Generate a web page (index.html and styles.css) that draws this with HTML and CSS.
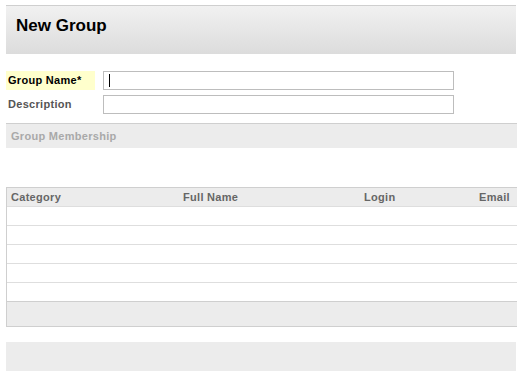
FILE: index.html
```html
<!DOCTYPE html>
<html lang="en">
<head>
    <meta charset="utf-8">
    <title>New Group</title>
    <link rel="stylesheet" href="styles.css">
</head>
<body>
<div class="page">
    <div class="title-bar">
        <h1>New Group</h1>
    </div>

    <div class="form">
        <div class="form-row">
            <label class="label required" for="groupName">Group Name*</label>
            <div class="field"><input type="text" id="groupName" class="text-input"><span class="caret"></span></div>
        </div>
        <div class="form-row">
            <label class="label" for="description">Description</label>
            <div class="field"><input type="text" id="description" class="text-input"></div>
        </div>
    </div>

    <div class="section-bar">Group Membership</div>

    <div class="grid">
        <div class="grid-head">
            <div class="col col-category">Category</div>
            <div class="col col-name">Full Name</div>
            <div class="col col-login">Login</div>
            <div class="col col-email">Email</div>
        </div>
        <div class="grid-row"></div>
        <div class="grid-row"></div>
        <div class="grid-row"></div>
        <div class="grid-row"></div>
        <div class="grid-row"></div>
        <div class="grid-foot"></div>
    </div>

    <div class="button-bar"></div>
</div>
</body>
</html>
```

FILE: styles.css
```css
body {
    margin: 0;
    font-family: "Liberation Sans", Arial, sans-serif;
    font-size: 11px;
    letter-spacing: 0.3px;
    background: #fff;
    overflow: hidden;
}

.page {
    padding: 5px 0 0 6px;
}

.title-bar {
    width: 510px;
    height: 48px;
    border-top: 1px solid #cfcfcf;
    background: linear-gradient(to bottom, #f1f1f1 0%, #dcdcdc 100%);
    display: flex;
    align-items: center;
}

.title-bar h1 {
    margin: 0 0 9px 10px;
    font-size: 17px;
    letter-spacing: 0;
    font-weight: bold;
    color: #000;
}

.form {
    padding-top: 17px;
    display: flex;
    flex-direction: column;
    gap: 5px;
}

.form-row {
    display: flex;
    align-items: center;
    height: 19px;
}

.label {
    width: 87px;
    height: 19px;
    line-height: 19px;
    padding-left: 2px;
    font-weight: bold;
    color: #555;
}

.label.required {
    background: #ffffcc;
    color: #000;
}

.field {
    position: relative;
    margin-left: 8px;
}

.text-input {
    box-sizing: border-box;
    width: 351px;
    height: 19px;
    margin: 0;
    border: 1px solid #bdbdbd;
    padding: 0 4px;
    outline: none;
    display: block;
}

.caret {
    position: absolute;
    left: 6px;
    top: 3px;
    width: 1px;
    height: 13px;
    background: #000;
}

.section-bar {
    margin-top: 9px;
    width: 511px;
    height: 24px;
    line-height: 24px;
    border-top: 1px solid #cfcfcf;
    background: #ececec;
    padding-left: 5px;
    font-weight: bold;
    color: #a9a9a9;
}

.grid {
    margin-top: 39px;
    width: 514px;
    border-left: 1px solid #cfcfcf;
}

.grid-head {
    display: flex;
    height: 18px;
    line-height: 18px;
    border-top: 1px solid #cfcfcf;
    background: #ececec;
    font-weight: bold;
    color: #666;
}

.col-category {
    width: 172px;
    padding-left: 4px;
}

.col-name {
    width: 181px;
}

.col-login {
    width: 115px;
}

.grid-row {
    height: 18px;
    border-top: 1px solid #dedede;
}

.grid-foot {
    height: 24px;
    border-top: 1px solid #cfcfcf;
    border-bottom: 1px solid #cfcfcf;
    background: #ececec;
}

.button-bar {
    margin-top: 15px;
    width: 510px;
    height: 29px;
    background: #ececec;
}
```
